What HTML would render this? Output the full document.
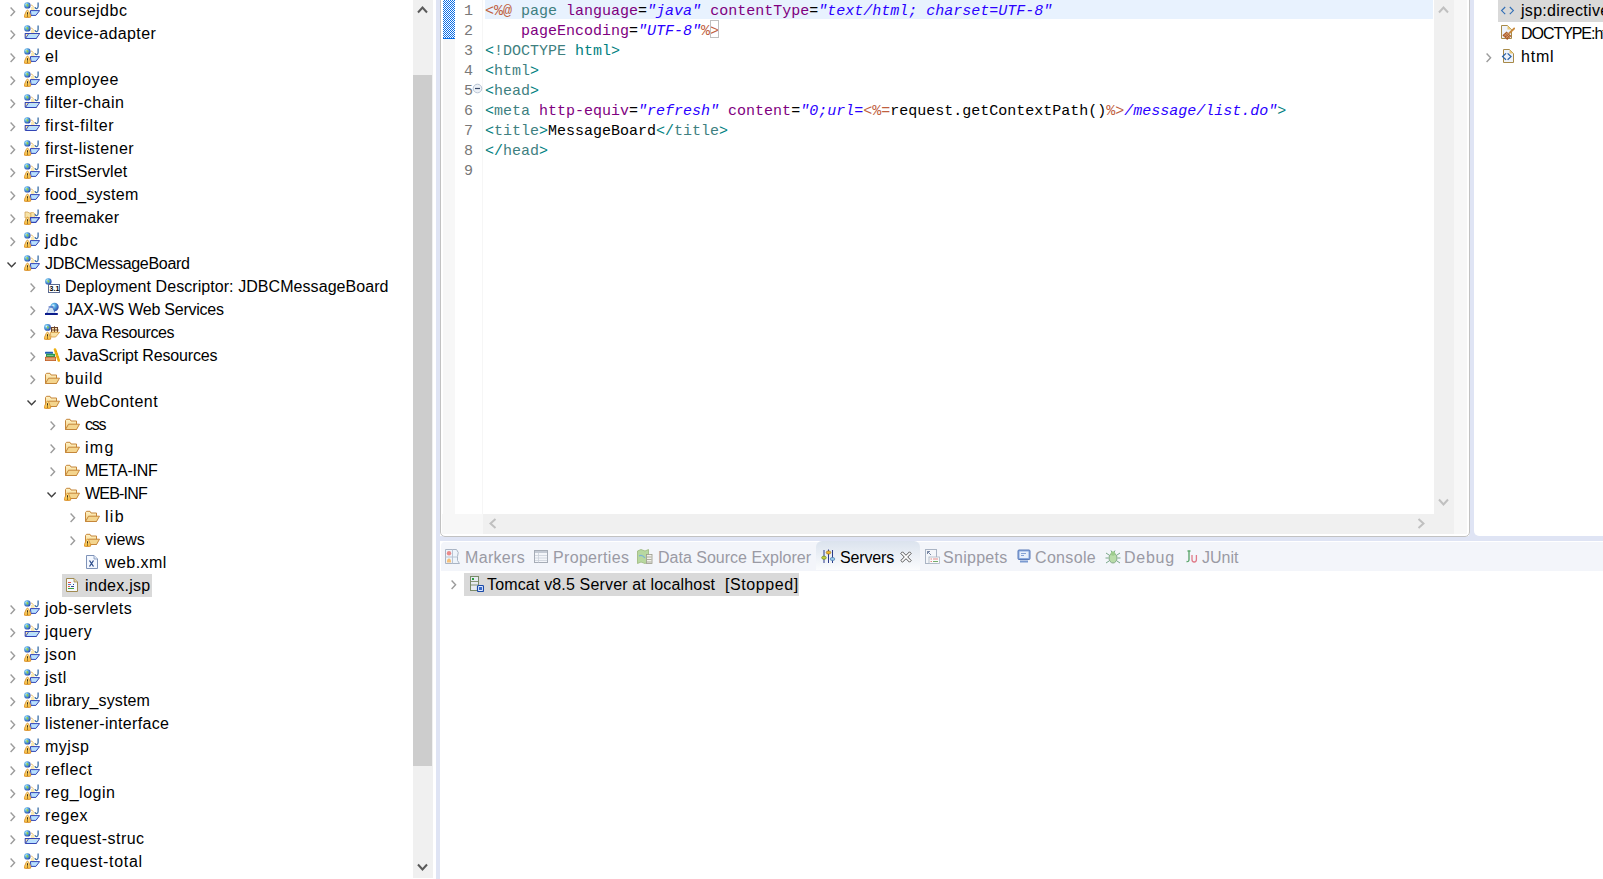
<!DOCTYPE html>
<html><head><meta charset="utf-8"><title>Eclipse</title>
<style>
html,body{margin:0;padding:0;width:1603px;height:879px;overflow:hidden;background:#fff;position:relative}
*{box-sizing:border-box}
.a{position:absolute}
.t{position:absolute;font-family:"Liberation Sans",sans-serif;font-size:16px;line-height:23px;height:23px;white-space:pre;color:#000}
.ic{position:absolute;width:16px;height:16px}
.arr{position:absolute;width:10px;height:10px}
.code{position:absolute;left:485px;font-family:"Liberation Mono",monospace;font-size:15px;line-height:20px;height:20px;white-space:pre;color:#000}
.ln{position:absolute;left:455px;width:18px;text-align:right;font-family:"Liberation Mono",monospace;font-size:15px;line-height:20px;height:20px;color:#787878}
.dl{color:#bf5f3f}.tg{color:#3f7f7f}.an{color:#7f007f}.av{color:#2a00ff;font-style:italic}.bk{color:#000}.dt{color:#008080}.br{color:#008080}
.tab{position:absolute;top:543px;height:29px;font-family:"Liberation Sans",sans-serif;font-size:16px;line-height:29px;white-space:pre;color:#9a9aa4}
</style></head><body>


<svg width="0" height="0" style="position:absolute">
<defs>
 <radialGradient id="gl" cx="0.35" cy="0.35" r="0.7">
  <stop offset="0" stop-color="#e8f4ff"/><stop offset="0.35" stop-color="#5ab4e6"/><stop offset="1" stop-color="#2c46a8"/>
 </radialGradient>
 <linearGradient id="fold" x1="0" y1="0" x2="0" y2="1">
  <stop offset="0" stop-color="#fff3c8"/><stop offset="1" stop-color="#f2cf7e"/>
 </linearGradient>
 <linearGradient id="warn" x1="0" y1="0" x2="0" y2="1">
  <stop offset="0" stop-color="#fff0a0"/><stop offset="1" stop-color="#f5b230"/>
 </linearGradient>
 <symbol id="globe" viewBox="0 0 16 16">
  <circle cx="3.4" cy="3.4" r="3.2" fill="url(#gl)"/>
  <path d="M2.2 2.2 Q4 1.8 4.6 3.4 Q4 5 2.8 4.6 Z" fill="#8cc63f" opacity="0.9"/>
 </symbol>
 <symbol id="warnsym" viewBox="0 0 16 16">
  <path d="M3.5 8.2 Q4.3 8.2 4.8 9.5 L6.6 13.6 Q7.2 15.6 5.6 15.6 L1.4 15.6 Q-0.2 15.6 0.4 13.6 L2.2 9.5 Q2.7 8.2 3.5 8.2 Z" fill="url(#warn)" stroke="#d98f2a" stroke-width="0.9"/>
  <rect x="3.05" y="10.2" width="0.95" height="2.4" fill="#3a2a10"/><rect x="3.05" y="13.5" width="0.95" height="1" fill="#3a2a10"/>
 </symbol>
 <symbol id="projbase" viewBox="0 0 16 16">
  <use href="#globe" width="16" height="16"/>
  <path d="M7 3.2 Q8 2.6 8.6 4 L9.5 5" fill="none" stroke="#e0b050" stroke-width="0.8"/>
  <rect x="7" y="5" width="3.5" height="3.3" fill="#fbe9b0"/>
  <path d="M14.1 0.6 V4.6 C14.1 7.1 11.5 7.1 11 5.2" fill="none" stroke="#3a6ea8" stroke-width="1.3"/>
 </symbol>
 <symbol id="proj" viewBox="0 0 16 16">
  <use href="#projbase" width="16" height="16"/>
  <path d="M1.2 8.5 V13 L2 13.5 H12.2 L15.6 8.5 Z" fill="#fbe7a0" stroke="#3345b5" stroke-width="1.05" stroke-linejoin="round"/>
  <path d="M4.4 9.2 H14.8 L11.8 13 H2 Z" fill="#b8e0ff"/>
  <path d="M4.4 9.1 L1.8 13" stroke="#3345b5" stroke-width="0.9"/>
 </symbol>
 <symbol id="projw" viewBox="0 0 16 16">
  <use href="#projbase" width="16" height="16"/>
  <path d="M6.4 8.6 H15.6 L11.9 13.4 H7 Z" fill="#b8e0ff" stroke="#3345b5" stroke-width="1" stroke-linejoin="round"/>
  <use href="#warnsym" width="16" height="16"/>
 </symbol>
 <symbol id="projf" viewBox="0 0 16 16">
  <path d="M1 3 h3 l1 1 h2 v5 h-6 z" fill="#f7e3a8" stroke="#c99a4a" stroke-width="0.7"/>
  <path d="M7 3.5 h2.5 l0.8 1 h0.5 v4 h-3.8 z" fill="#f7e3a8" stroke="#d9a850" stroke-width="0.6"/>
  <path d="M14.1 0.6 V4.6 C14.1 7.1 11.5 7.1 11 5.2" fill="none" stroke="#3a6ea8" stroke-width="1.3"/>
  <path d="M6.5 8.6 H15.6 L11.8 13.4 H6.9 Z" fill="#b8e0ff" stroke="#3345b5" stroke-width="1.1" stroke-linejoin="round"/>
  <use href="#warnsym" width="16" height="16"/>
 </symbol>
 <symbol id="folder" viewBox="0 0 16 16">
  <path d="M1.5 4.5 V13.5 H12.5 V5 H7 L6 3.3 H2.5 Z" fill="url(#fold)" stroke="#c5863a" stroke-width="1" stroke-linejoin="round"/>
  <path d="M1.5 13.5 L4.5 8.2 H15.5 L12.5 13.5 Z" fill="#f4d58e" stroke="#c5863a" stroke-width="1" stroke-linejoin="round"/>
 </symbol>
 <symbol id="folderw" viewBox="0 0 16 16">
  <use href="#folder" width="16" height="16"/>
  <use href="#warnsym" width="16" height="16"/>
 </symbol>
 <symbol id="xml" viewBox="0 0 16 16">
  <path d="M2.5 1.5 H10 L13.5 5 V14.5 H2.5 Z" fill="#f4f8ff" stroke="#7f93b8" stroke-width="1"/>
  <path d="M10 1.5 V5 H13.5" fill="#dfe8f5" stroke="#7f93b8" stroke-width="0.8"/>
  <path d="M5.5 6.5 L9.5 12.5 M9.5 6.5 L5.5 12.5" stroke="#2a4a8a" stroke-width="1.3"/>
 </symbol>
 <symbol id="jsp" viewBox="0 0 16 16">
  <path d="M2.5 1.5 H10 L13.5 5 V14.5 H2.5 Z" fill="#f6f9fd" stroke="#a08a50" stroke-width="1"/>
  <path d="M10 1.5 V5 H13.5" fill="#e8d9a8" stroke="#a08a50" stroke-width="0.8"/>
  <rect x="4" y="5" width="3" height="1" fill="#e0504a"/>
  <rect x="4" y="7" width="3" height="1" fill="#5a7ab8"/><rect x="9" y="7" width="1" height="1" fill="#2a4a9a"/>
  <rect x="4" y="9" width="2" height="1" fill="#e0504a"/><rect x="7" y="9" width="3" height="1" fill="#2a4a9a"/>
  <rect x="4" y="11" width="6" height="1" fill="#3aa040"/>
 </symbol>
 <symbol id="dd" viewBox="0 0 16 16">
  <use href="#globe" x="1" y="0" width="16" height="16"/>
  <rect x="4.5" y="6.5" width="11" height="8" fill="#fff" stroke="#5a6a90" stroke-width="1"/>
  <text x="5.6" y="13.4" font-family="Liberation Sans" font-weight="bold" font-size="7" fill="#000">3.1</text>
 </symbol>
 <symbol id="jaxws" viewBox="0 0 16 16">
  <circle cx="10.5" cy="6" r="4.2" fill="url(#gl)"/>
  <path d="M2.8 12.2 L5.3 6.6 H8.7 L11.2 12.2 Z" fill="#d4e4f4"/>
  <path d="M2.8 12.2 L5.3 6.6 M8.7 6.6 L11.2 12.2" stroke="#3a5ab8" stroke-width="1" stroke-dasharray="1.1 0.9"/>
  <rect x="4.6" y="5.3" width="4.8" height="1.3" fill="#4a6ac0"/>
  <rect x="1" y="12" width="12.8" height="2" fill="#0c1c8c"/>
 </symbol>
 <symbol id="javares" viewBox="0 0 16 16">
  <circle cx="3.5" cy="3.4" r="3.4" fill="url(#gl)"/>
  <path d="M3 2.2 Q4.5 2 5 3.6 Q4.2 5.2 3.2 4.6 Z" fill="#8cc63f" opacity="0.9"/>
  <rect x="7.5" y="3.5" width="6" height="5" fill="#f8e0a8" stroke="#6a4028" stroke-width="1"/>
  <path d="M10.5 2.3 V8.5 M7.5 6 H14.6" stroke="#6a4028" stroke-width="1"/>
  <path d="M6.2 8.3 H15.6 L11.6 13 H7 Z" fill="#f9e2a6" stroke="#dba24a" stroke-width="0.9" stroke-linejoin="round"/>
  <use href="#warnsym" width="16" height="16"/>
 </symbol>
 <symbol id="jsres" viewBox="0 0 16 16">
  <rect x="1" y="4.8" width="8" height="2" rx="0.5" fill="#1f5fb8"/>
  <rect x="2" y="6.8" width="9" height="3.2" fill="#2a9a50"/>
  <rect x="3" y="8" width="6.5" height="0.8" fill="#8ad0a0"/>
  <rect x="1.4" y="10.2" width="10.2" height="3.4" fill="#e0a070" stroke="#c05a20" stroke-width="0.8"/>
  <path d="M11 2.5 L12.2 6 L13.2 9 L14.8 13.5" stroke="#f0b010" stroke-width="2.6" stroke-linecap="round" fill="none"/>
  <path d="M11.5 4.3 H13 M12.4 7 H13.9 M13.4 10 H14.9" stroke="#d08a00" stroke-width="0.7"/>
 </symbol>
 <symbol id="chev" viewBox="0 0 16 16">
  <path d="M6.2 5 L2.6 8.6 L6.2 12.2 M10.8 5 L14.4 8.6 L10.8 12.2" fill="none" stroke="#2f6db5" stroke-width="1.1"/>
 </symbol>
 <symbol id="doctype" viewBox="0 0 16 16">
  <path d="M2.5 1.5 H8.5 L12.5 5.5 V14.5 H2.5 Z" fill="#eef3fb" stroke="#a88a48" stroke-width="1"/>
  <path d="M8.5 1.5 V5.5 H12.5 Z" fill="#e8c878"/>
  <path d="M15.8 4 L10 9.5" stroke="#c9883a" stroke-width="1.8"/>
  <path d="M3.4 11.2 L7.6 7.4 L12.4 12 L8.2 16 Z" fill="#a85a2a"/>
  <path d="M5.2 9.6 L10 14.3 M6.6 8.4 L11.2 13 M4.8 12.6 L9 8.6 M6.5 14.3 L10.6 10.4" stroke="#e0a878" stroke-width="0.7"/>
 </symbol>
 <symbol id="htmlf" viewBox="0 0 16 16">
  <path d="M2.5 1.5 H8.5 L12.5 5.5 V14.5 H2.5 Z" fill="#eef3fb" stroke="#a88a48" stroke-width="1"/>
  <path d="M8.5 1.5 V5.5 H12.5 Z" fill="#e8c878"/>
  <path d="M5 5.4 L1.6 8.6 L5 11.8 M6.6 5.4 L10 8.6 L6.6 11.8" fill="none" stroke="#2a62a8" stroke-width="1.3"/>
 </symbol>
 <symbol id="markers" viewBox="0 0 16 16">
  <path d="M0.5 0.5 H11.5 Q14.5 3 12.5 7.5 Q11.5 12 14.5 14.5 H0.5 Z" fill="#eef4fb" stroke="#a9b4c4" stroke-width="1"/>
  <path d="M7.5 0.5 V14.5 M0.5 8 H12" stroke="#b8c4d4" stroke-width="1"/>
  <circle cx="4" cy="4.3" r="2.2" fill="#e98a8a"/>
  <path d="M1.8 13.5 Q2 9.5 4 9.5 Q6 9.5 6.2 13.5 Z" fill="#f5c07a"/>
 </symbol>
 <symbol id="props" viewBox="0 0 16 16">
  <rect x="0.5" y="1.5" width="13" height="12" fill="#f4f6fa" stroke="#a6acb6" stroke-width="1"/>
  <rect x="1" y="2" width="12" height="2" fill="#c4cad4"/>
  <path d="M1 6.5 H13 M1 9 H13 M1 11.5 H13 M4.5 4 V13.5" stroke="#ccd2da" stroke-width="0.8"/>
 </symbol>
 <symbol id="dse" viewBox="0 0 16 16">
  <path d="M0.5 2 L4 0.5 L8 2 L11.5 0.5 V13 L8 14.5 L4 13 L0.5 14.5 Z" fill="#b8d8a0" stroke="#9cb87c" stroke-width="0.8"/>
  <path d="M2 7 Q5 5 8 9" stroke="#7ab0d8" stroke-width="1.2" fill="none"/>
  <rect x="9.5" y="5.5" width="5.5" height="9" fill="#f2f2ec" stroke="#9a9a8a" stroke-width="0.8"/>
  <path d="M10 8 H14.5 M10 10.5 H14.5 M10 13 H14.5" stroke="#9a9a8a" stroke-width="0.8"/>
 </symbol>
 <symbol id="servers" viewBox="0 0 16 16">
  <path d="M3 1 V14 M7.5 0.5 V14 M11.5 1 V14" stroke="#2a3a8a" stroke-width="1"/>
  <ellipse cx="3" cy="8.7" rx="2.3" ry="1.6" fill="#c8d040" stroke="#6a8a20" stroke-width="0.7"/>
  <ellipse cx="7.5" cy="3.5" rx="2.3" ry="1.6" fill="#f0b830" stroke="#a07010" stroke-width="0.7"/>
  <ellipse cx="11.5" cy="10" rx="2.3" ry="1.6" fill="#98c8e8" stroke="#4a80b0" stroke-width="0.7"/>
 </symbol>
 <symbol id="snip" viewBox="0 0 16 16">
  <rect x="0.5" y="0.5" width="11" height="14" fill="#f4f6fa" stroke="#aab4c4" stroke-width="1"/>
  <path d="M2.5 5 L2.5 2.5 L5 2.5 M2.5 2.5 L6 6" stroke="#6a7a9a" stroke-width="0.9" fill="none"/>
  <rect x="4" y="8" width="10.5" height="6.5" fill="#fbfbfb" stroke="#aab4c4" stroke-width="0.8"/>
  <path d="M5.5 10 H7 M8 10 H13 M5.5 12.5 H7 M8 12.5 H13" stroke="#e07a7a" stroke-width="0.9"/>
  <path d="M8 12.5 H13" stroke="#6ab06a" stroke-width="0.9"/>
 </symbol>
 <symbol id="console" viewBox="0 0 16 16">
  <rect x="1" y="1" width="12" height="9.5" rx="1" fill="#8aaade" stroke="#5a7ab8" stroke-width="1"/>
  <rect x="2.5" y="2.5" width="9" height="6.5" fill="#e8f0fb"/>
  <path d="M4 4.5 H9 M4 6.5 H7" stroke="#7a9ad0" stroke-width="0.9"/>
  <rect x="3" y="11.5" width="8" height="2" fill="#7a9ad0"/>
 </symbol>
 <symbol id="debug" viewBox="0 0 16 16">
  <path d="M1 4 L4 6 M15 4 L12 6 M0.5 9 H3.5 M15.5 9 H12.5 M1 14 L4 12 M15 14 L12 12 M6 1.5 L7 3.5 M10 1.5 L9 3.5" stroke="#7aa88a" stroke-width="1"/>
  <ellipse cx="8" cy="9" rx="4" ry="5" fill="#b8dca8" stroke="#7aa080" stroke-width="0.9"/>
  <circle cx="8" cy="4.5" r="2.2" fill="#9ccc8c"/>
 </symbol>
 <symbol id="junit" viewBox="0 0 16 16">
  <path d="M4.5 2 H7.5 M6 2 V10.5 Q6 13 3.5 12.5" stroke="#60a870" stroke-width="1.4" fill="none"/>
  <path d="M9 6 V10.5 Q9 13 11.2 13 Q13.4 13 13.4 10.5 V6" stroke="#e07a88" stroke-width="1.3" fill="none"/>
 </symbol>
 <symbol id="server" viewBox="0 0 16 16">
  <rect x="2.5" y="0.5" width="8" height="14" fill="#e6eaf2" stroke="#7a8a6a" stroke-width="1"/>
  <rect x="4" y="2" width="2" height="2" fill="#2aa040"/>
  <path d="M3 5.5 H10 M3 9 H10" stroke="#7a8a6a" stroke-width="0.9"/>
  <rect x="9.5" y="9.5" width="6" height="6" rx="1" fill="#dfe8ff" stroke="#1a4aa8" stroke-width="1.2"/>
  <rect x="11" y="11" width="3" height="3" fill="#3a6ac8"/>
 </symbol>
</defs>
</svg>

<div class="a" style="left:0;top:0;width:413px;height:879px;background:#fff"></div>
<svg class="a" style="left:10px;top:7px" width="6" height="10" viewBox="0 0 6 10"><path d="M0.6 0.6 L4.6 4.8 L0.6 9" fill="none" stroke="#9b9b9b" stroke-width="1.4"/></svg>
<svg class="ic" style="left:24px;top:2px"><use href="#projw"/></svg>
<div class="t" style="left:45px;top:-1px;letter-spacing:0.5px">coursejdbc</div>
<svg class="a" style="left:10px;top:30px" width="6" height="10" viewBox="0 0 6 10"><path d="M0.6 0.6 L4.6 4.8 L0.6 9" fill="none" stroke="#9b9b9b" stroke-width="1.4"/></svg>
<svg class="ic" style="left:24px;top:25px"><use href="#proj"/></svg>
<div class="t" style="left:45px;top:22px;letter-spacing:0.377px">device-adapter</div>
<svg class="a" style="left:10px;top:53px" width="6" height="10" viewBox="0 0 6 10"><path d="M0.6 0.6 L4.6 4.8 L0.6 9" fill="none" stroke="#9b9b9b" stroke-width="1.4"/></svg>
<svg class="ic" style="left:24px;top:48px"><use href="#projw"/></svg>
<div class="t" style="left:45px;top:45px;letter-spacing:0.7px">el</div>
<svg class="a" style="left:10px;top:76px" width="6" height="10" viewBox="0 0 6 10"><path d="M0.6 0.6 L4.6 4.8 L0.6 9" fill="none" stroke="#9b9b9b" stroke-width="1.4"/></svg>
<svg class="ic" style="left:24px;top:71px"><use href="#projw"/></svg>
<div class="t" style="left:45px;top:68px;letter-spacing:0.571px">employee</div>
<svg class="a" style="left:10px;top:99px" width="6" height="10" viewBox="0 0 6 10"><path d="M0.6 0.6 L4.6 4.8 L0.6 9" fill="none" stroke="#9b9b9b" stroke-width="1.4"/></svg>
<svg class="ic" style="left:24px;top:94px"><use href="#proj"/></svg>
<div class="t" style="left:45px;top:91px;letter-spacing:0.455px">filter-chain</div>
<svg class="a" style="left:10px;top:122px" width="6" height="10" viewBox="0 0 6 10"><path d="M0.6 0.6 L4.6 4.8 L0.6 9" fill="none" stroke="#9b9b9b" stroke-width="1.4"/></svg>
<svg class="ic" style="left:24px;top:117px"><use href="#proj"/></svg>
<div class="t" style="left:45px;top:114px;letter-spacing:0.664px">first-filter</div>
<svg class="a" style="left:10px;top:145px" width="6" height="10" viewBox="0 0 6 10"><path d="M0.6 0.6 L4.6 4.8 L0.6 9" fill="none" stroke="#9b9b9b" stroke-width="1.4"/></svg>
<svg class="ic" style="left:24px;top:140px"><use href="#projw"/></svg>
<div class="t" style="left:45px;top:137px;letter-spacing:0.454px">first-listener</div>
<svg class="a" style="left:10px;top:168px" width="6" height="10" viewBox="0 0 6 10"><path d="M0.6 0.6 L4.6 4.8 L0.6 9" fill="none" stroke="#9b9b9b" stroke-width="1.4"/></svg>
<svg class="ic" style="left:24px;top:163px"><use href="#projw"/></svg>
<div class="t" style="left:45px;top:160px;letter-spacing:0.118px">FirstServlet</div>
<svg class="a" style="left:10px;top:191px" width="6" height="10" viewBox="0 0 6 10"><path d="M0.6 0.6 L4.6 4.8 L0.6 9" fill="none" stroke="#9b9b9b" stroke-width="1.4"/></svg>
<svg class="ic" style="left:24px;top:186px"><use href="#projw"/></svg>
<div class="t" style="left:45px;top:183px;letter-spacing:0.26px">food_system</div>
<svg class="a" style="left:10px;top:214px" width="6" height="10" viewBox="0 0 6 10"><path d="M0.6 0.6 L4.6 4.8 L0.6 9" fill="none" stroke="#9b9b9b" stroke-width="1.4"/></svg>
<svg class="ic" style="left:24px;top:209px"><use href="#projf"/></svg>
<div class="t" style="left:45px;top:206px;letter-spacing:0.25px">freemaker</div>
<svg class="a" style="left:10px;top:237px" width="6" height="10" viewBox="0 0 6 10"><path d="M0.6 0.6 L4.6 4.8 L0.6 9" fill="none" stroke="#9b9b9b" stroke-width="1.4"/></svg>
<svg class="ic" style="left:24px;top:232px"><use href="#projw"/></svg>
<div class="t" style="left:45px;top:229px;letter-spacing:1.133px">jdbc</div>
<svg class="a" style="left:7px;top:262px" width="10" height="6" viewBox="0 0 10 6"><path d="M0.5 0.6 L4.6 4.8 L8.7 0.6" fill="none" stroke="#404040" stroke-width="1.4"/></svg>
<svg class="ic" style="left:24px;top:255px"><use href="#projw"/></svg>
<div class="t" style="left:45px;top:252px;letter-spacing:-0.293px">JDBCMessageBoard</div>
<svg class="a" style="left:30px;top:283px" width="6" height="10" viewBox="0 0 6 10"><path d="M0.6 0.6 L4.6 4.8 L0.6 9" fill="none" stroke="#9b9b9b" stroke-width="1.4"/></svg>
<svg class="ic" style="left:44px;top:278px"><use href="#dd"/></svg>
<div class="t" style="left:65px;top:275px;letter-spacing:0.066px">Deployment Descriptor: JDBCMessageBoard</div>
<svg class="a" style="left:30px;top:306px" width="6" height="10" viewBox="0 0 6 10"><path d="M0.6 0.6 L4.6 4.8 L0.6 9" fill="none" stroke="#9b9b9b" stroke-width="1.4"/></svg>
<svg class="ic" style="left:44px;top:301px"><use href="#jaxws"/></svg>
<div class="t" style="left:65px;top:298px;letter-spacing:-0.239px">JAX-WS Web Services</div>
<svg class="a" style="left:30px;top:329px" width="6" height="10" viewBox="0 0 6 10"><path d="M0.6 0.6 L4.6 4.8 L0.6 9" fill="none" stroke="#9b9b9b" stroke-width="1.4"/></svg>
<svg class="ic" style="left:44px;top:324px"><use href="#javares"/></svg>
<div class="t" style="left:65px;top:321px;letter-spacing:-0.392px">Java Resources</div>
<svg class="a" style="left:30px;top:352px" width="6" height="10" viewBox="0 0 6 10"><path d="M0.6 0.6 L4.6 4.8 L0.6 9" fill="none" stroke="#9b9b9b" stroke-width="1.4"/></svg>
<svg class="ic" style="left:44px;top:347px"><use href="#jsres"/></svg>
<div class="t" style="left:65px;top:344px;letter-spacing:-0.163px">JavaScript Resources</div>
<svg class="a" style="left:30px;top:375px" width="6" height="10" viewBox="0 0 6 10"><path d="M0.6 0.6 L4.6 4.8 L0.6 9" fill="none" stroke="#9b9b9b" stroke-width="1.4"/></svg>
<svg class="ic" style="left:44px;top:370px"><use href="#folder"/></svg>
<div class="t" style="left:65px;top:367px;letter-spacing:0.9px">build</div>
<svg class="a" style="left:27px;top:400px" width="10" height="6" viewBox="0 0 10 6"><path d="M0.5 0.6 L4.6 4.8 L8.7 0.6" fill="none" stroke="#404040" stroke-width="1.4"/></svg>
<svg class="ic" style="left:44px;top:393px"><use href="#folderw"/></svg>
<div class="t" style="left:65px;top:390px;letter-spacing:0.444px">WebContent</div>
<svg class="a" style="left:50px;top:421px" width="6" height="10" viewBox="0 0 6 10"><path d="M0.6 0.6 L4.6 4.8 L0.6 9" fill="none" stroke="#9b9b9b" stroke-width="1.4"/></svg>
<svg class="ic" style="left:64px;top:416px"><use href="#folder"/></svg>
<div class="t" style="left:85px;top:413px;letter-spacing:-1.2px">css</div>
<svg class="a" style="left:50px;top:444px" width="6" height="10" viewBox="0 0 6 10"><path d="M0.6 0.6 L4.6 4.8 L0.6 9" fill="none" stroke="#9b9b9b" stroke-width="1.4"/></svg>
<svg class="ic" style="left:64px;top:439px"><use href="#folder"/></svg>
<div class="t" style="left:85px;top:436px;letter-spacing:1.3px">img</div>
<svg class="a" style="left:50px;top:467px" width="6" height="10" viewBox="0 0 6 10"><path d="M0.6 0.6 L4.6 4.8 L0.6 9" fill="none" stroke="#9b9b9b" stroke-width="1.4"/></svg>
<svg class="ic" style="left:64px;top:462px"><use href="#folder"/></svg>
<div class="t" style="left:85px;top:459px;letter-spacing:-0.214px">META-INF</div>
<svg class="a" style="left:47px;top:492px" width="10" height="6" viewBox="0 0 10 6"><path d="M0.5 0.6 L4.6 4.8 L8.7 0.6" fill="none" stroke="#404040" stroke-width="1.4"/></svg>
<svg class="ic" style="left:64px;top:485px"><use href="#folderw"/></svg>
<div class="t" style="left:85px;top:482px;letter-spacing:-0.8px">WEB-INF</div>
<svg class="a" style="left:70px;top:513px" width="6" height="10" viewBox="0 0 6 10"><path d="M0.6 0.6 L4.6 4.8 L0.6 9" fill="none" stroke="#9b9b9b" stroke-width="1.4"/></svg>
<svg class="ic" style="left:84px;top:508px"><use href="#folder"/></svg>
<div class="t" style="left:105px;top:505px;letter-spacing:1.3px">lib</div>
<svg class="a" style="left:70px;top:536px" width="6" height="10" viewBox="0 0 6 10"><path d="M0.6 0.6 L4.6 4.8 L0.6 9" fill="none" stroke="#9b9b9b" stroke-width="1.4"/></svg>
<svg class="ic" style="left:84px;top:531px"><use href="#folderw"/></svg>
<div class="t" style="left:105px;top:528px;letter-spacing:-0.075px">views</div>
<svg class="ic" style="left:84px;top:554px"><use href="#xml"/></svg>
<div class="t" style="left:105px;top:551px;letter-spacing:0.433px">web.xml</div>
<div class="a" style="left:62px;top:574px;width:90px;height:23px;background:#d9d9d9"></div>
<svg class="ic" style="left:64px;top:577px"><use href="#jsp"/></svg>
<div class="t" style="left:85px;top:574px;letter-spacing:0.25px">index.jsp</div>
<svg class="a" style="left:10px;top:605px" width="6" height="10" viewBox="0 0 6 10"><path d="M0.6 0.6 L4.6 4.8 L0.6 9" fill="none" stroke="#9b9b9b" stroke-width="1.4"/></svg>
<svg class="ic" style="left:24px;top:600px"><use href="#projw"/></svg>
<div class="t" style="left:45px;top:597px;letter-spacing:0.445px">job-servlets</div>
<svg class="a" style="left:10px;top:628px" width="6" height="10" viewBox="0 0 6 10"><path d="M0.6 0.6 L4.6 4.8 L0.6 9" fill="none" stroke="#9b9b9b" stroke-width="1.4"/></svg>
<svg class="ic" style="left:24px;top:623px"><use href="#proj"/></svg>
<div class="t" style="left:45px;top:620px;letter-spacing:0.62px">jquery</div>
<svg class="a" style="left:10px;top:651px" width="6" height="10" viewBox="0 0 6 10"><path d="M0.6 0.6 L4.6 4.8 L0.6 9" fill="none" stroke="#9b9b9b" stroke-width="1.4"/></svg>
<svg class="ic" style="left:24px;top:646px"><use href="#projw"/></svg>
<div class="t" style="left:45px;top:643px;letter-spacing:0.567px">json</div>
<svg class="a" style="left:10px;top:674px" width="6" height="10" viewBox="0 0 6 10"><path d="M0.6 0.6 L4.6 4.8 L0.6 9" fill="none" stroke="#9b9b9b" stroke-width="1.4"/></svg>
<svg class="ic" style="left:24px;top:669px"><use href="#projw"/></svg>
<div class="t" style="left:45px;top:666px;letter-spacing:0.567px">jstl</div>
<svg class="a" style="left:10px;top:697px" width="6" height="10" viewBox="0 0 6 10"><path d="M0.6 0.6 L4.6 4.8 L0.6 9" fill="none" stroke="#9b9b9b" stroke-width="1.4"/></svg>
<svg class="ic" style="left:24px;top:692px"><use href="#projw"/></svg>
<div class="t" style="left:45px;top:689px;letter-spacing:0.138px">library_system</div>
<svg class="a" style="left:10px;top:720px" width="6" height="10" viewBox="0 0 6 10"><path d="M0.6 0.6 L4.6 4.8 L0.6 9" fill="none" stroke="#9b9b9b" stroke-width="1.4"/></svg>
<svg class="ic" style="left:24px;top:715px"><use href="#projw"/></svg>
<div class="t" style="left:45px;top:712px;letter-spacing:0.335px">listener-interface</div>
<svg class="a" style="left:10px;top:743px" width="6" height="10" viewBox="0 0 6 10"><path d="M0.6 0.6 L4.6 4.8 L0.6 9" fill="none" stroke="#9b9b9b" stroke-width="1.4"/></svg>
<svg class="ic" style="left:24px;top:738px"><use href="#projw"/></svg>
<div class="t" style="left:45px;top:735px;letter-spacing:0.5px">myjsp</div>
<svg class="a" style="left:10px;top:766px" width="6" height="10" viewBox="0 0 6 10"><path d="M0.6 0.6 L4.6 4.8 L0.6 9" fill="none" stroke="#9b9b9b" stroke-width="1.4"/></svg>
<svg class="ic" style="left:24px;top:761px"><use href="#projw"/></svg>
<div class="t" style="left:45px;top:758px;letter-spacing:0.55px">reflect</div>
<svg class="a" style="left:10px;top:789px" width="6" height="10" viewBox="0 0 6 10"><path d="M0.6 0.6 L4.6 4.8 L0.6 9" fill="none" stroke="#9b9b9b" stroke-width="1.4"/></svg>
<svg class="ic" style="left:24px;top:784px"><use href="#projw"/></svg>
<div class="t" style="left:45px;top:781px;letter-spacing:0.512px">reg_login</div>
<svg class="a" style="left:10px;top:812px" width="6" height="10" viewBox="0 0 6 10"><path d="M0.6 0.6 L4.6 4.8 L0.6 9" fill="none" stroke="#9b9b9b" stroke-width="1.4"/></svg>
<svg class="ic" style="left:24px;top:807px"><use href="#projw"/></svg>
<div class="t" style="left:45px;top:804px;letter-spacing:0.625px">regex</div>
<svg class="a" style="left:10px;top:835px" width="6" height="10" viewBox="0 0 6 10"><path d="M0.6 0.6 L4.6 4.8 L0.6 9" fill="none" stroke="#9b9b9b" stroke-width="1.4"/></svg>
<svg class="ic" style="left:24px;top:830px"><use href="#proj"/></svg>
<div class="t" style="left:45px;top:827px;letter-spacing:0.475px">request-struc</div>
<svg class="a" style="left:10px;top:858px" width="6" height="10" viewBox="0 0 6 10"><path d="M0.6 0.6 L4.6 4.8 L0.6 9" fill="none" stroke="#9b9b9b" stroke-width="1.4"/></svg>
<svg class="ic" style="left:24px;top:853px"><use href="#projw"/></svg>
<div class="t" style="left:45px;top:850px;letter-spacing:0.675px">request-total</div>
<div class="a" style="left:413px;top:0;width:20px;height:878px;background:#f0f0f0"></div>
<div class="a" style="left:413px;top:75px;width:19px;height:691px;background:#cdcdcd"></div>
<svg class="a" style="left:417px;top:5px" width="11" height="9" viewBox="0 0 11 9"><path d="M1 7.5 L5.5 2.5 L10 7.5" fill="none" stroke="#5a5a5a" stroke-width="2"/></svg>
<svg class="a" style="left:417px;top:863px" width="11" height="9" viewBox="0 0 11 9"><path d="M1 1.5 L5.5 6.5 L10 1.5" fill="none" stroke="#5a5a5a" stroke-width="2"/></svg>
<div class="a" style="left:436px;top:0;width:4px;height:879px;background:#dfe4f4"></div>
<div class="a" style="left:436px;top:536px;width:1167px;height:5px;background:#dfe4f4"></div>
<div class="a" style="left:1469px;top:0;width:5px;height:541px;background:#dfe4f4"></div>
<div class="a" style="left:440px;top:-10px;width:1030px;height:547px;border-radius:0 0 5px 5px;background:#fff;overflow:hidden"><div class="a" style="left:-440px;top:10px;width:1603px;height:879px">
<div class="a" style="left:443px;top:0;width:12px;height:514px;background:#f7f7f7"></div>
<div class="a" style="left:443px;top:0;width:12px;height:38px;background-color:#fff;background-image:conic-gradient(#0a6ee6 25%,#fff 0 50%,#0a6ee6 0 75%,#fff 0);background-size:2px 2px"></div>
<div class="a" style="left:443px;top:38px;width:12px;height:1px;background:#0a6ee6"></div>
<div class="a" style="left:482px;top:0;width:1px;height:514px;background:#f6f6f6"></div>
<div class="a" style="left:442px;top:514px;width:41px;height:20px;background:#f7f7f7"></div>
<div class="a" style="left:483px;top:514px;width:951px;height:20px;background:#f0f0f0"></div>
<div class="a" style="left:1434px;top:0;width:20px;height:534px;background:#f0f0f0"></div>
<div class="a" style="left:1454px;top:0;width:13px;height:534px;background:#f7f7f7"></div>
<svg class="a" style="left:1438px;top:5px" width="11" height="9" viewBox="0 0 11 9"><path d="M1 7.5 L5.5 2.5 L10 7.5" fill="none" stroke="#c0c0c0" stroke-width="2"/></svg>
<svg class="a" style="left:1438px;top:498px" width="11" height="9" viewBox="0 0 11 9"><path d="M1 1.5 L5.5 6.5 L10 1.5" fill="none" stroke="#c0c0c0" stroke-width="2"/></svg>
<svg class="a" style="left:488px;top:518px" width="9" height="11" viewBox="0 0 9 11"><path d="M7.5 1 L2.5 5.5 L7.5 10" fill="none" stroke="#c0c0c0" stroke-width="2"/></svg>
<svg class="a" style="left:1417px;top:518px" width="9" height="11" viewBox="0 0 9 11"><path d="M1.5 1 L6.5 5.5 L1.5 10" fill="none" stroke="#c0c0c0" stroke-width="2"/></svg>
<div class="a" style="left:485px;top:0;width:948px;height:19px;background:#e8f2fe"></div>
<div class="ln" style="top:2px">1</div>
<div class="code" style="top:2px"><span class="dl">&lt;%@</span> <span class="tg">page</span> <span class="an">language</span>=<span class="av">"java"</span> <span class="an">contentType</span>=<span class="av">"text/html; charset=UTF-8"</span></div>
<div class="ln" style="top:22px">2</div>
<div class="code" style="top:22px">    <span class="an">pageEncoding</span>=<span class="av">"UTF-8"</span><span class="dl">%&gt;</span></div>
<div class="ln" style="top:42px">3</div>
<div class="code" style="top:42px"><span class="br">&lt;</span><span class="tg">!DOCTYPE</span> <span class="br">html&gt;</span></div>
<div class="ln" style="top:62px">4</div>
<div class="code" style="top:62px"><span class="br">&lt;</span><span class="tg">html</span><span class="br">&gt;</span></div>
<div class="ln" style="top:82px">5</div>
<div class="code" style="top:82px"><span class="br">&lt;</span><span class="tg">head</span><span class="br">&gt;</span></div>
<div class="ln" style="top:102px">6</div>
<div class="code" style="top:102px"><span class="br">&lt;</span><span class="tg">meta</span> <span class="an">http-equiv</span>=<span class="av">"refresh"</span> <span class="an">content</span>=<span class="av">"0;url=</span><span class="dl">&lt;%=</span>request.getContextPath()<span class="dl">%&gt;</span><span class="av">/message/list.do"</span><span class="br">&gt;</span></div>
<div class="ln" style="top:122px">7</div>
<div class="code" style="top:122px"><span class="br">&lt;</span><span class="tg">title</span><span class="br">&gt;</span>MessageBoard<span class="br">&lt;/</span><span class="tg">title</span><span class="br">&gt;</span></div>
<div class="ln" style="top:142px">8</div>
<div class="code" style="top:142px"><span class="br">&lt;/</span><span class="tg">head</span><span class="br">&gt;</span></div>
<div class="ln" style="top:162px">9</div>
<div class="code" style="top:162px"></div>
<div class="a" style="left:710px;top:20px;width:9px;height:18px;border:1px solid #c0c0c0"></div>
<svg class="a" style="left:472px;top:83px" width="11" height="11" viewBox="0 0 11 11"><circle cx="5.5" cy="5.5" r="4.3" fill="#eef2f8" stroke="#b8c4d4" stroke-width="1"/><path d="M3 5.5 H8" stroke="#3a4a6a" stroke-width="1.2"/></svg>
</div></div>
<div class="a" style="left:440px;top:-10px;width:1030px;height:547px;border:1px solid #c2c2c2;border-radius:0 0 5px 5px"></div>
<div class="a" style="left:1474px;top:520px;width:12px;height:17px;background:#dfe4f4"></div>
<div class="a" style="left:1474px;top:0;width:129px;height:536px;background:#fff;border-radius:0 0 0 5px"></div>
<div class="a" style="left:1498px;top:-1px;width:105px;height:23px;background:#d9d9d9"></div>
<svg class="ic" style="left:1499px;top:2px"><use href="#chev"/></svg>
<div class="t" style="left:1521px;top:-1px;letter-spacing:0.3px">jsp:directive.page</div>
<svg class="ic" style="left:1499px;top:24px"><use href="#doctype"/></svg>
<div class="t" style="left:1521px;top:22px;letter-spacing:-1.05px">DOCTYPE:html</div>
<svg class="a" style="left:1486px;top:53px" width="6" height="10" viewBox="0 0 6 10"><path d="M0.6 0.6 L4.6 4.8 L0.6 9" fill="none" stroke="#9b9b9b" stroke-width="1.4"/></svg>
<svg class="ic" style="left:1501px;top:48px"><use href="#htmlf"/></svg>
<div class="t" style="left:1521px;top:45px;letter-spacing:0.8px">html</div>
<div class="a" style="left:440px;top:541px;width:1163px;height:338px;background:#fff;border-radius:5px 0 0 0;overflow:hidden">
<div class="a" style="left:1px;top:1px;width:1163px;height:29px;background:#f3f5fa;border-radius:4px 0 0 0"></div>
</div>
<div class="a" style="left:816px;top:541px;width:104px;height:29px;border-radius:6px 6px 0 0;background:linear-gradient(#dbe3ee,#fbfcfd)"></div>
<svg class="ic" style="left:445px;top:549px"><use href="#markers"/></svg>
<div class="tab" style="left:465px;color:#9a9aa4;letter-spacing:0.33px">Markers</div>
<svg class="ic" style="left:534px;top:549px"><use href="#props"/></svg>
<div class="tab" style="left:553px;color:#9a9aa4;letter-spacing:0.33px">Properties</div>
<svg class="ic" style="left:637px;top:549px"><use href="#dse"/></svg>
<div class="tab" style="left:658px;color:#9a9aa4;letter-spacing:0px">Data Source Explorer</div>
<svg class="ic" style="left:821px;top:549px"><use href="#servers"/></svg>
<div class="tab" style="left:840px;color:#000;letter-spacing:-0.15px">Servers</div>
<svg class="ic" style="left:925px;top:549px"><use href="#snip"/></svg>
<div class="tab" style="left:943px;color:#9a9aa4;letter-spacing:0.28px">Snippets</div>
<svg class="ic" style="left:1017px;top:549px"><use href="#console"/></svg>
<div class="tab" style="left:1035px;color:#9a9aa4;letter-spacing:0.33px">Console</div>
<svg class="ic" style="left:1105px;top:549px"><use href="#debug"/></svg>
<div class="tab" style="left:1124px;color:#9a9aa4;letter-spacing:0.75px">Debug</div>
<svg class="ic" style="left:1183px;top:549px"><use href="#junit"/></svg>
<div class="tab" style="left:1202px;color:#9a9aa4;letter-spacing:0px">JUnit</div>
<svg class="a" style="left:900px;top:551px" width="12" height="12" viewBox="0 0 12 12"><path d="M2.5 0.8 L6 4.3 L9.5 0.8 L11.2 2.5 L7.7 6 L11.2 9.5 L9.5 11.2 L6 7.7 L2.5 11.2 L0.8 9.5 L4.3 6 L0.8 2.5 Z" fill="#fff" stroke="#555" stroke-width="1"/></svg>
<div class="a" style="left:464px;top:573px;width:335px;height:23px;background:#d9d9d9"></div>
<svg class="a" style="left:451px;top:580px" width="6" height="10" viewBox="0 0 6 10"><path d="M0.6 0.6 L4.6 4.8 L0.6 9" fill="none" stroke="#9b9b9b" stroke-width="1.4"/></svg>
<svg class="ic" style="left:468px;top:576px"><use href="#server"/></svg>
<div class="t" style="left:487px;top:573px;letter-spacing:0.16px">Tomcat v8.5 Server at localhost</div>
<div class="t" style="left:725px;top:573px;letter-spacing:0.6px">[Stopped]</div>
</body></html>
